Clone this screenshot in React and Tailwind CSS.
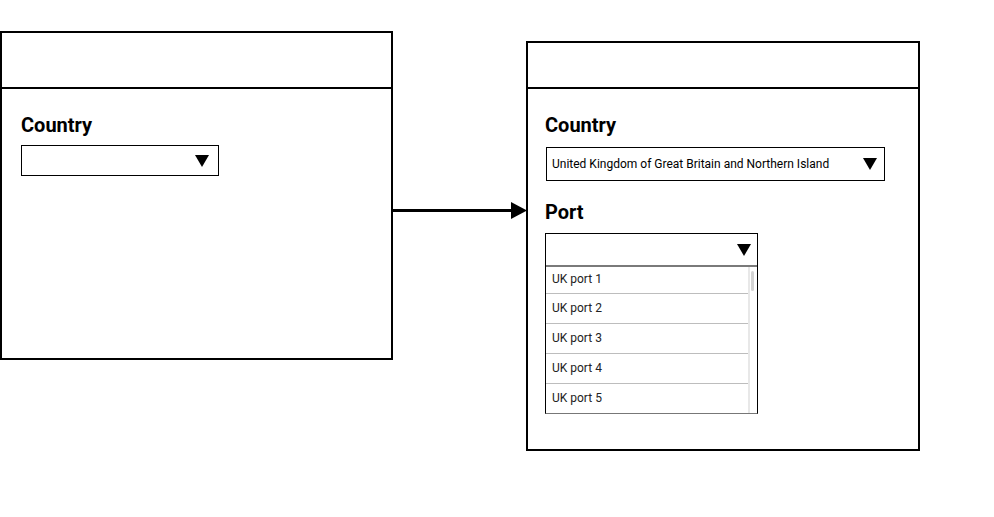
import React from "react";

function Caret({ className = "" }) {
  return (
    <svg width="14" height="12" viewBox="0 0 14 12" className={className}>
      <polygon points="0,0 14,0 7,12" fill="#000" />
    </svg>
  );
}

const ports = ["UK port 1", "UK port 2", "UK port 3", "UK port 4", "UK port 5"];

function itemHeight(i) {
  if (i === 0) return "h-[27px] border-b border-[#bdbdbd]";
  if (i === ports.length - 1) return "h-[29px]";
  return "h-[30px] border-b border-[#bdbdbd]";
}

export default function App() {
  return (
    <div
      className="relative h-[517px] w-[994px] overflow-hidden bg-white text-black"
      style={{ fontFamily: "Roboto, 'Liberation Sans', sans-serif" }}
    >
      {/* Before */}
      <div className="absolute left-0 top-[31px] flex h-[329px] w-[393px] flex-col border-2 border-black bg-white">
        <div className="h-[56px] shrink-0 border-b-2 border-black" />
        <div className="flex flex-col pl-[19px] pt-[24px]">
          <h3 className="text-[20px] font-bold leading-[24px]">Country</h3>
          <div className="mt-[8px] flex h-[31px] w-[198px] items-center justify-end border border-black pr-[9px]">
            <Caret />
          </div>
        </div>
      </div>

      {/* Arrow */}
      <svg
        className="absolute left-[392px] top-[201px]"
        width="136"
        height="20"
        viewBox="0 0 136 20"
      >
        <line x1="0" y1="9.5" x2="122" y2="9.5" stroke="#000" strokeWidth="3" />
        <polygon points="119,1 135,9.5 119,18" fill="#000" />
      </svg>

      {/* After */}
      <div className="absolute left-[526px] top-[41px] flex h-[410px] w-[394px] flex-col border-2 border-black bg-white">
        <div className="h-[46px] shrink-0 border-b-2 border-black" />
        <div className="flex flex-col pl-[17px] pt-[24px]">
          <h3 className="text-[20px] font-bold leading-[24px]">Country</h3>
          <div className="ml-px mt-[10px] flex h-[34px] w-[339px] items-center justify-between border border-black pl-[5px] pr-[7px]">
            <span className="pb-px text-[12px] leading-none">
              United Kingdom of Great Britain and Northern Island
            </span>
            <Caret />
          </div>

          <h3 className="mt-[19px] text-[20px] font-bold leading-[24px]">Port</h3>
          <div className="mt-[9px] flex w-[213px] flex-col border border-black border-b-[#777]">
            <div className="flex h-[33px] items-center justify-end border-b-2 border-[#7a7a7a] pr-[6px]">
              <Caret />
            </div>
            <div className="flex">
              <ul className="flex-1">
                {ports.map((p, i) => (
                  <li
                    key={p}
                    className={`flex items-center pb-[2px] pl-[6px] text-[12px] text-[#222] ${itemHeight(i)}`}
                  >
                    {p}
                  </li>
                ))}
              </ul>
              <div className="w-[9px] border-l-2 border-[#e8e8e8]">
                <div className="ml-px mt-[4px] h-[20px] w-[3px] rounded-sm bg-[#d4d4d4]" />
              </div>
            </div>
          </div>
        </div>
      </div>
    </div>
  );
}
